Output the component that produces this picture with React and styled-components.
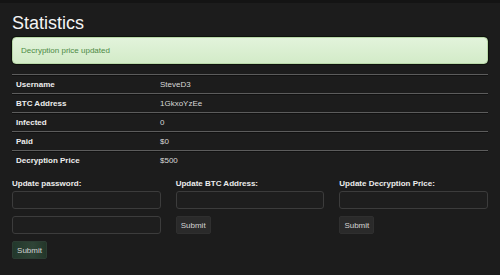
import React from 'react';
import styled, { createGlobalStyle } from "styled-components";

const GlobalStyle = createGlobalStyle`
    html, body {
        margin: 0;
        padding: 0;
        background: #1c1c1c;
    }
    body {
        font-family: "Liberation Sans", Arial, sans-serif;
        color: #e0e0e0;
    }
`;

const TopBar = styled.div`
    height: 3px;
    background: #141414;
`;

const Page = styled.div`
    padding: 0 12px;
    height: 272px;
    box-sizing: border-box;
`;

const Title = styled.h1`
    margin: 8px 0 0;
    font-size: 18px;
    line-height: 24px;
    font-weight: normal;
    color: #f4f4f4;
`;

const Alert = styled.div`
    margin-top: 2px;
    height: 27px;
    box-sizing: border-box;
    padding: 0 8px;
    display: flex;
    align-items: center;

    border: 1px solid #b9d8a8;
    border-radius: 4px;
    background: linear-gradient(to bottom, #e2f3db, #d3ebc8);
    box-shadow: 0 0 0 1px #0e120c;

    font-size: 8px;
    color: #4d8a45;
`;

const Table = styled.div`
    margin-top: 10px;
    display: flex;
    flex-direction: column;
`;

const Row = styled.div`
    display: grid;
    grid-template-columns: 144px 1fr;
    height: 19px;
    box-sizing: border-box;
    padding-left: 4px;
    align-items: center;

    border-top: 1px solid #5c5c5c;
    box-shadow: inset 0 1px 0 #111;

    font-size: 8px;
`;

const Label = styled.div`
    font-weight: bold;
    color: #eeeeee;
`;

const Value = styled.div`
    color: #d8d8d8;
`;

const Forms = styled.div`
    margin-top: 10px;
    display: grid;
    grid-template-columns: repeat(3, 1fr);
    column-gap: 15px;
`;

const Form = styled.div`
    display: flex;
    flex-direction: column;
    align-items: flex-start;
    gap: 7px;
`;

const FormLabel = styled.div`
    font-size: 8px;
    line-height: 10px;
    font-weight: bold;
    color: #ececec;
    margin-bottom: -5px;
`;

const Input = styled.input`
    width: 100%;
    height: 18px;
    box-sizing: border-box;
    margin: 0;
    padding: 0 4px;
    background: #1e1e1e;
    border: 1px solid #3c3c3c;
    border-radius: 3px;
    outline: 0;
    color: #ddd;
    font-family: inherit;
    font-size: 8px;
`;

const Button = styled.button`
    height: 18px;
    width: 35px;
    padding: 0;
    margin: 0;
    box-sizing: border-box;
    border: 1px solid ${(props) => props.active ? "#2c3d33" : "#2f2f2f"};
    border-radius: 2px;
    background: ${(props) => props.active
        ? "linear-gradient(to right, #22382c, #2b4033 40%, #2f4437 60%, #233629)"
        : "#2a2a2a"};
    color: #d4d4d4;
    font-family: inherit;
    font-size: 8px;
`;

const stats = [
    ["Username", "SteveD3"],
    ["BTC Address", "1GkxoYzEe"],
    ["Infected", "0"],
    ["Paid", "$0"],
    ["Decryption Price", "$500"],
];

export default function App () {
    return (
        <>
            <GlobalStyle />
            <TopBar />
            <Page>
                <Title>Statistics</Title>
                <Alert>Decryption price updated</Alert>
                <Table>
                    {stats.map(([label, value]) => (
                        <Row key={label}>
                            <Label>{label}</Label>
                            <Value>{value}</Value>
                        </Row>
                    ))}
                </Table>
                <Forms>
                    <Form>
                        <FormLabel>Update password:</FormLabel>
                        <Input type="password" />
                        <Input type="password" />
                        <Button active>Submit</Button>
                    </Form>
                    <Form>
                        <FormLabel>Update BTC Address:</FormLabel>
                        <Input type="text" />
                        <Button>Submit</Button>
                    </Form>
                    <Form>
                        <FormLabel>Update Decryption Price:</FormLabel>
                        <Input type="text" />
                        <Button>Submit</Button>
                    </Form>
                </Forms>
            </Page>
        </>
    );
}
